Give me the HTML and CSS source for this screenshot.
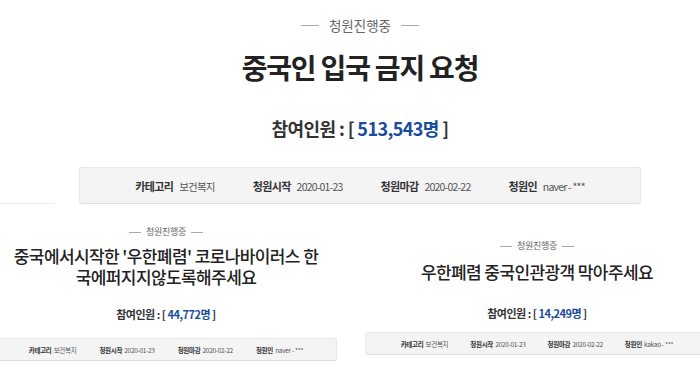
FILE: index.html
```html
<!DOCTYPE html>
<html>
<head>
    <meta charset="UTF-8">
    <link rel="stylesheet" href="styles.css">
</head>

<body>
    <div class="petition main">
        <div class="status"><span>청원진행중</span></div>
        <h1 class="title">중국인 입국 금지 요청</h1>
        <p class="count">참여인원 : [ <span class="num">513,543명</span> ]</p>
        <ul class="info">
            <li><b>카테고리</b> <span>보건복지</span></li>
            <li><b>청원시작</b> <span>2020-01-23</span></li>
            <li><b>청원마감</b> <span>2020-02-22</span></li>
            <li><b>청원인</b> <span>naver - ***</span></li>
        </ul>
    </div>

    <div class="clips">
        <div class="petition left">
            <div class="edge"></div>
            <div class="status"><span>청원진행중</span></div>
            <h2 class="title">중국에서시작한 '우한폐렴' 코로나바이러스 한<br>국에퍼지지않도록해주세요</h2>
            <p class="count">참여인원 : [ <span class="num">44,772명</span> ]</p>
            <ul class="info">
                <li><b>카테고리</b> <span>보건복지</span></li>
                <li><b>청원시작</b> <span>2020-01-23</span></li>
                <li><b>청원마감</b> <span>2020-02-22</span></li>
                <li><b>청원인</b> <span>naver - ***</span></li>
            </ul>
        </div>

        <div class="petition right">
            <div class="status"><span>청원진행중</span></div>
            <h2 class="title">우한폐렴 중국인관광객 막아주세요</h2>
            <p class="count">참여인원 : [ <span class="num">14,249명</span> ]</p>
            <ul class="info">
                <li><b>카테고리</b> <span>보건복지</span></li>
                <li><b>청원시작</b> <span>2020-01-23</span></li>
                <li><b>청원마감</b> <span>2020-02-22</span></li>
                <li><b>청원인</b> <span>kakao - ***</span></li>
            </ul>
        </div>
    </div>
</body>
</html>
```

FILE: styles.css
```css
body {
    margin: 0;
    width: 700px;
    height: 383px;
    overflow: hidden;
    background: #fff;
    color: #333;
    font-family: "Noto Sans CJK KR", "Noto Sans", sans-serif;
}

.petition {
    text-align: center;
}

.status {
    display: flex;
    justify-content: center;
    align-items: center;
    color: #666;
}

.status::before,
.status::after {
    content: "";
    height: 1px;
    background: #aaa;
}

.title {
    margin: 0 auto;
    color: #222;
}

.count {
    margin: 0;
    font-weight: 700;
    color: #333;
}

.count .num {
    color: #1a4c9e;
}

.info {
    display: flex;
    justify-content: center;
    margin: 0;
    padding: 0;
    list-style: none;
    background: #f4f4f4;
    border: 1px solid #e8e8e8;
    border-bottom-color: #dedede;
    border-radius: 3px;
    color: #555;
}

.info b {
    color: #333;
}

/* top petition */
.main {
    padding: 16px 0 0 20px;
}

.main .status {
    font-size: 13.5px;
    line-height: 18px;
    gap: 10px;
}

.main .status::before,
.main .status::after {
    width: 18px;
}

.main .title {
    margin-top: 15px;
    font-size: 28px;
    line-height: 36px;
    letter-spacing: -1.2px;
    font-weight: 700;
}

.main .count {
    margin-top: 31px;
    font-size: 18px;
    line-height: 24px;
    letter-spacing: -0.6px;
}

.main .info {
    width: 560px;
    margin: 27px auto 0;
    height: 35px;
    align-items: center;
    gap: 38px;
    font-size: 11px;
    letter-spacing: -0.6px;
}

.main .info b {
    margin-right: 4px;
}

.main .info li span {
    font-size: 10.5px;
    letter-spacing: -0.8px;
}

/* the two clipped petitions below */
.clips {
    display: flex;
    align-items: flex-start;
}

.left {
    width: 342px;
    margin-left: -5px;
    flex: none;
}

.edge {
    width: 60px;
    margin-top: -4px;
    height: 3px;
    border-bottom: 1px solid #eee;
}

.left .status,
.right .status {
    font-size: 9px;
    line-height: 12px;
    gap: 5px;
    letter-spacing: -0.3px;
}

.left .status::before,
.left .status::after,
.right .status::before,
.right .status::after {
    width: 12px;
}

.left .status {
    margin-top: 22px;
}

.left .title {
    margin-top: 7px;
    font-size: 17px;
    line-height: 21px;
    font-weight: 500;
    letter-spacing: -0.6px;
}

.left .count,
.right .count {
    font-size: 11px;
    line-height: 18px;
    letter-spacing: -0.5px;
}

.left .count {
    margin-top: 18px;
}

.left .info,
.right .info {
    height: 21px;
    align-items: center;
    gap: 23px;
    font-size: 6.5px;
    letter-spacing: -0.3px;
}

.left .info b,
.right .info b {
    margin-right: 1px;
}

.left .info {
    margin-top: 15px;
}

.right {
    width: 344px;
    margin-left: 28px;
    flex: none;
    padding-top: 36px;
}

.right .title {
    margin-top: 9px;
    font-size: 17px;
    line-height: 22px;
    font-weight: 500;
    letter-spacing: -0.6px;
}

.right .count {
    margin-top: 21px;
}

.right .info {
    margin-top: 10px;
    gap: 22px;
}
```
